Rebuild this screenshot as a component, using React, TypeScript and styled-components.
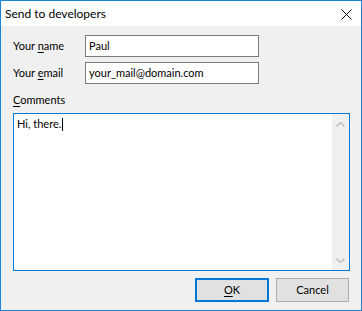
import React from "react";
import styled, { createGlobalStyle } from "styled-components";

const Global = createGlobalStyle`
  html, body { margin: 0; padding: 0; background: #ffffff; }
  body { font-family: Lato, "Liberation Sans", sans-serif; }
`;

const Window = styled.div`
  box-sizing: border-box;
  width: 362px;
  height: 311px;
  border: 1px solid #1883d7;
  background: #f0f0f0;
  display: flex;
  flex-direction: column;
  font-family: Lato, "Liberation Sans", sans-serif;
  font-size: 11px;
  color: #000;
`;

const TitleBar = styled.div`
  height: 25px;
  background: #ffffff;
  display: flex;
  align-items: center;
  justify-content: space-between;
  padding-left: 4px;
  padding-right: 9px;
  flex-shrink: 0;
`;

const Title = styled.span`
  font-size: 12px;
  line-height: 16px;
  margin-top: 1px;
`;

const CloseIcon = styled.svg`
  width: 11px;
  height: 11px;
  display: block;
  margin-top: 1px;
`;

const Body = styled.div`
  flex: 1;
  display: flex;
  flex-direction: column;
  padding: 9px 11px 0 12px;
`;

const FieldGrid = styled.div`
  display: grid;
  grid-template-columns: 72px 174px;
  row-gap: 5px;
  align-items: center;
`;

const Label = styled.label`
  line-height: 16px;
`;

const Input = styled.div`
  box-sizing: border-box;
  height: 22px;
  border: 1px solid #7a7a7a;
  background: #ffffff;
  padding: 0 3px;
  line-height: 19px;
  white-space: nowrap;
  overflow: hidden;
`;

const CommentsLabel = styled.label`
  display: block;
  line-height: 16px;
  margin-top: 8px;
  margin-bottom: 5px;
`;

const TextArea = styled.div`
  box-sizing: border-box;
  height: 158px;
  border: 1px solid #0078d7;
  background: #ffffff;
  display: flex;
`;

const TextContent = styled.div`
  flex: 1;
  padding: 2px 3px;
  line-height: 16px;
`;

const Caret = styled.span`
  display: inline-block;
  width: 1px;
  height: 13px;
  background: #000;
  vertical-align: -3px;
  margin-left: 1px;
`;

const ScrollBar = styled.div`
  width: 17px;
  background: #f0f0f0;
  display: flex;
  flex-direction: column;
  justify-content: space-between;
  align-items: center;
  padding: 8px 0 7px;
  box-sizing: border-box;
`;

const Chevron = styled.svg`
  width: 9px;
  height: 5px;
  display: block;
`;

const ButtonRow = styled.div`
  display: flex;
  justify-content: flex-end;
  gap: 7px;
  margin-top: 7px;
  padding-right: 1px;
`;

const Button = styled.div<{ $default?: boolean; $w: number }>`
  box-sizing: border-box;
  width: ${(p) => p.$w}px;
  height: 24px;
  background: #e1e1e1;
  border: ${(p) => (p.$default ? "2px solid #0078d7" : "1px solid #adadad")};
  display: flex;
  align-items: center;
  justify-content: center;
  line-height: 16px;
`;

const U = styled.span`
  text-decoration: underline;
  text-underline-offset: 2px;
`;

export default function App() {
  return (
    <>
      <Global />
      <Window>
        <TitleBar>
          <Title>Send to developers</Title>
          <CloseIcon viewBox="0 0 11 11">
            <path d="M0.5 0.5 L10.5 10.5 M10.5 0.5 L0.5 10.5" stroke="#000" strokeWidth="1" fill="none" />
          </CloseIcon>
        </TitleBar>
        <Body>
          <FieldGrid>
            <Label>Your <U>n</U>ame</Label>
            <Input>Paul</Input>
            <Label>Your <U>e</U>mail</Label>
            <Input>your_mail@domain.com</Input>
          </FieldGrid>
          <CommentsLabel><U>C</U>omments</CommentsLabel>
          <TextArea>
            <TextContent>
              Hi, there.<Caret />
            </TextContent>
            <ScrollBar>
              <Chevron viewBox="0 0 9 5">
                <path d="M0.5 4.5 L4.5 0.5 L8.5 4.5" stroke="#c2c2c2" strokeWidth="1.6" fill="none" />
              </Chevron>
              <Chevron viewBox="0 0 9 5">
                <path d="M0.5 0.5 L4.5 4.5 L8.5 0.5" stroke="#c2c2c2" strokeWidth="1.6" fill="none" />
              </Chevron>
            </ScrollBar>
          </TextArea>
          <ButtonRow>
            <Button $default $w={74}><U>O</U>K</Button>
            <Button $w={73}>Cancel</Button>
          </ButtonRow>
        </Body>
      </Window>
    </>
  );
}
